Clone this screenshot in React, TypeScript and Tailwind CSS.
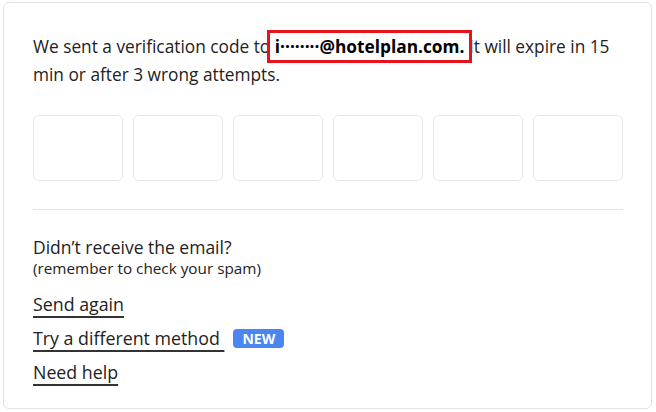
export default function App() {
    const boxes = [0, 1, 2, 3, 4, 5];
    return (
        <div className="w-[656px] h-[412px] bg-white pt-[2px] pl-[3px] pr-[4px] pb-[3px]" style={{ fontFamily: "'Open Sans', 'Liberation Sans', sans-serif" }}>
            <div className="h-full border border-[#e3e3e6] rounded-md px-[29px] pt-[30px] text-[#222222]">
                {/* intro */}
                <p className="text-[17.3px] leading-[28px] w-[590px]">
                    We sent a verification code to{" "}
                    <span className="relative font-bold text-black">
                        i········@hotelplan.com.
                        <span className="absolute -left-[8px] -right-[8px] -top-[5px] -bottom-[5px] border-[3px] border-[#e8121b]" />
                    </span>{" "}
                    It will expire in 15 min or after 3 wrong attempts.
                </p>

                {/* code inputs */}
                <div className="mt-[26px] flex gap-[10px]">
                    {boxes.map((b) => (
                        <input
                            key={b}
                            type="text"
                            maxLength={1}
                            className="w-[90px] h-[66px] border border-[#e8e8ea] rounded-md outline-none"
                        />
                    ))}
                </div>

                <div className="mt-[28px] h-px bg-[#e2e2e4] w-[590px]" />

                {/* resend */}
                <div className="mt-[26px]">
                    <p className="text-[17.5px] leading-[22px]">Didn’t receive the email?</p>
                    <p className="text-[15.3px] leading-[20px]">(remember to check your spam)</p>
                </div>
                <div className="mt-[14px] flex flex-col items-start gap-[10px] text-[17.8px]">
                    <a className="leading-[24px] underline decoration-[1.5px] underline-offset-[5px] decoration-[#333]">Send again</a>
                    <div className="flex items-center gap-[9px]">
                        <a className="leading-[24px] underline decoration-[1.5px] underline-offset-[5px] decoration-[#333] whitespace-pre">Try a different method </a>
                        <span className="bg-[#4a86f0] text-white text-[14px] font-bold rounded-[4px] px-[9px] leading-[19px]">NEW</span>
                    </div>
                    <a className="leading-[24px] underline decoration-[1.5px] underline-offset-[5px] decoration-[#333]">Need help</a>
                </div>
            </div>
        </div>
    );
}
